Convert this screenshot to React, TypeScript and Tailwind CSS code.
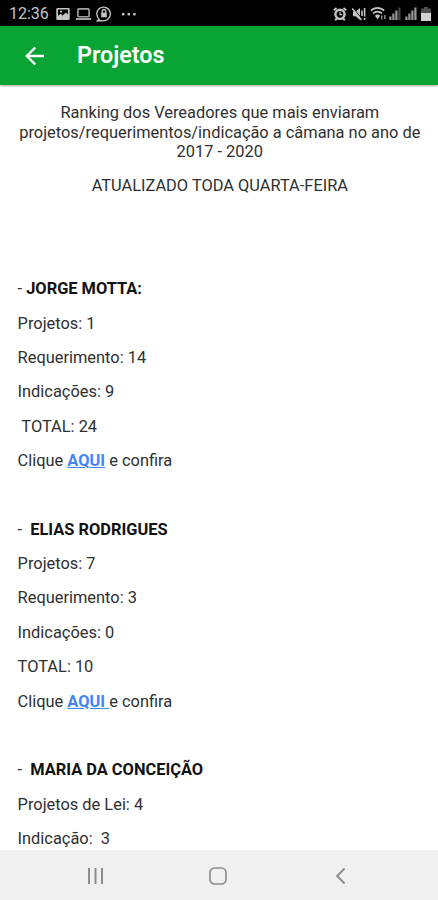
import { type ReactNode } from "react";

type RankingItem = {
  name: string;
  lines: string[];
  link?: string;
};

const ranking: RankingItem[] = [
  {
    name: " JORGE MOTTA:",
    lines: ["Projetos: 1", "Requerimento: 14", "Indicações: 9", " TOTAL: 24"],
    link: "AQUI",
  },
  {
    name: "  ELIAS RODRIGUES",
    lines: ["Projetos: 7", "Requerimento: 3", "Indicações: 0", "TOTAL: 10"],
    link: "AQUI ",
  },
  {
    name: "  MARIA DA CONCEIÇÃO",
    lines: ["Projetos de Lei: 4", "Indicação:  3"],
  },
];

const Signal = ({ bars }: { bars: number }) => (
  <svg className="h-[13px] w-[12px]" viewBox="0 0 12 13">
    {[0, 1, 2, 3].map((i) => (
      <rect
        key={i}
        x={i * 3 + 0.3}
        y={9.5 - i * 3}
        width="2.2"
        height={3.5 + i * 3}
        fill={i < bars ? "#989898" : "#444"}
      />
    ))}
  </svg>
);

const StatusBar = () => (
  <div className="flex h-[26px] shrink-0 items-center bg-black pt-[1px] pr-[7px] pl-[9px] text-[#c4c4c4]">
    <span className="w-[47px] text-[16px] leading-[26px]">12:36</span>

    {/* Notificações */}
    <svg className="h-[14px] w-[14px]" viewBox="0 0 14 14">
      <path
        fill="currentColor"
        fillRule="evenodd"
        d="M1.5 1h11q1.2 0 1.2 1.2v9.6q0 1.2-1.2 1.2h-11Q.3 13 .3 11.8V2.2Q.3 1 1.5 1ZM2 2.6V9l2.6-2.2 2 1.7L10 5.5l2 2V2.6ZM5 3.5a1.1 1.1 0 1 1 0 2.2 1.1 1.1 0 0 1 0-2.2Z"
      />
    </svg>
    <svg className="ml-[5px] h-[14px] w-[17px] text-[#a5a5a5]" viewBox="0 0 17 14" fill="none" stroke="currentColor">
      <rect x="2.9" y="1.9" width="11.2" height="7.8" rx="1" strokeWidth="1.6" />
      <path d="M.8 12h15.4" strokeWidth="2" />
    </svg>
    <svg className="ml-[4px] h-[16px] w-[16px]" viewBox="0 0 16 16" fill="none" stroke="currentColor">
      <path d="M3.2 13.2A6.8 6.8 0 1 1 6 14.6L1.3 14.7Z" strokeWidth="1.3" />
      <rect x="5.2" y="6.7" width="5.6" height="4.6" fill="currentColor" stroke="none" />
      <path d="M6.2 7V5.3a1.8 1.8 0 0 1 3.6 0V7" strokeWidth="1.3" />
    </svg>
    <svg className="ml-[9px] h-[4px] w-[16px]" viewBox="0 0 16 4" fill="currentColor">
      <rect x="1" y="1" width="2.4" height="2.4" />
      <rect x="6.6" y="1" width="2.4" height="2.4" />
      <rect x="12.2" y="1" width="2.4" height="2.4" />
    </svg>

    {/* Sistema */}
    <div className="ml-auto flex items-center">
      <svg className="h-[14px] w-[14px]" viewBox="0 0 14 14" fill="none" stroke="currentColor">
        <circle cx="7" cy="7.3" r="4.6" strokeWidth="2.4" />
        <path d="M7 4.8v2.8h2.2" strokeWidth="1.2" />
        <path d="M.8 3.3 3.6.9M13.2 3.3 10.4.9M2.2 13.3l1.8-2M11.8 13.3l-1.8-2" strokeWidth="2" />
      </svg>
      <svg className="ml-[5px] h-[14px] w-[14px]" viewBox="0 0 14 14" fill="none" stroke="currentColor">
        <path d="M1 4.5h2.6L8 1v12L3.6 9.2H1Z" fill="currentColor" stroke="none" />
        <path d="M1.2 1 10 12" stroke="#000" strokeWidth="1" />
        <path d="M.3 1.5 9.5 13" strokeWidth="1.3" />
        <path d="M10 3.5v5.5M12.6 1v8.5M12.6 11v2" strokeWidth="1.6" />
      </svg>
      <svg className="ml-[4px] h-[15px] w-[17px]" viewBox="0 0 17 15" fill="none" stroke="currentColor">
        <path d="M.8 4.7a9.5 9.5 0 0 1 13.4 0" strokeWidth="1.8" />
        <path d="M3 7.4a6.4 6.4 0 0 1 9 0" strokeWidth="1.8" />
        <path d="M4.9 9.8a3.2 3.2 0 0 1 5.2 0L7.5 13.2Z" fill="currentColor" stroke="none" />
        <path d="M11.8 9.5v4M14.8 9v4" strokeWidth="1.5" stroke="#888" />
      </svg>
      <div className="ml-[2px]">
        <Signal bars={3} />
      </div>
      <div className="ml-[4px]">
        <Signal bars={4} />
      </div>
      <svg className="ml-[4px] h-[14px] w-[10px]" viewBox="0 0 10 14">
        <path d="M3 0h4v1.5h3V7H0V1.5h3Z" fill="#505050" />
        <path d="M0 6h10v8H0Z" fill="#d2d2d2" />
      </svg>
    </div>
  </div>
);

const Header = ({ title }: { title: string }) => (
  <header className="z-10 flex h-[59px] shrink-0 items-center bg-[#09a534] pl-[25px] text-white shadow-[0_1px_2px_rgba(0,0,0,0.35)]">
    <svg className="h-5 w-5" viewBox="0 0 20 20" fill="none" stroke="currentColor" strokeWidth="2.4">
      <path d="M19 10H2.5M10.3 1.5 1.8 10l8.5 8.5" />
    </svg>
    <h1 className="ml-8 text-[23.3px] leading-none font-semibold">{title}</h1>
  </header>
);

const Line = ({ children }: { children?: ReactNode }) => (
  <p className="mb-[14.85px] min-h-[19.5px] whitespace-pre">{children}</p>
);

const NavBar = () => (
  <nav className="z-10 flex h-[50px] shrink-0 items-center bg-[#f0f0f0] pt-[2px] text-[#8c8c8c]">
    <svg className="ml-[87px] h-[18px] w-[18px]" viewBox="0 0 18 18" stroke="currentColor" strokeWidth="2">
      <path d="M2 1v16M8.5 1v16M15 1v16" />
    </svg>
    <svg className="ml-[104px] h-[18px] w-[18px]" viewBox="0 0 18 18" fill="none" stroke="currentColor" strokeWidth="1.7">
      <rect x="1" y="1" width="16" height="16" rx="4.5" />
    </svg>
    <svg className="ml-[109px] h-[18px] w-[10px]" viewBox="0 0 10 18" fill="none" stroke="currentColor" strokeWidth="2">
      <path d="M8.6 1.5 1.2 9l7.4 7.5" />
    </svg>
  </nav>
);

export default function App() {
  return (
    <div className="flex h-[900px] w-[438px] flex-col overflow-hidden bg-white font-['Roboto',sans-serif]">
      <StatusBar />
      <Header title="Projetos" />

      <main className="min-h-0 flex-1 overflow-hidden pt-[18px] pr-[16px] pl-[17.6px] text-[16.4px] leading-[19.5px] text-[#303030]">
        <div className="mb-[14.85px] text-center">
          Ranking dos Vereadores que mais enviaram
          <br />
          projetos/requerimentos/indicação a câmana no ano de
          <br />
          2017 - 2020
        </div>
        <div className="mb-[14.85px] text-center">ATUALIZADO TODA QUARTA-FEIRA</div>
        <Line />
        <Line />

        {ranking.map((item) => (
          <section key={item.name}>
            <Line>
              -<b className="font-bold text-[#111]">{item.name}</b>
            </Line>
            {item.lines.map((line) => (
              <Line key={line}>{line}</Line>
            ))}
            {item.link && (
              <>
                <Line>
                  Clique{" "}
                  <a className="font-bold text-[#4285f4] underline">{item.link}</a>
                  {item.link.endsWith(" ") ? "" : " "}e confira
                </Line>
                <Line />
              </>
            )}
          </section>
        ))}
      </main>

      <NavBar />
    </div>
  );
}
